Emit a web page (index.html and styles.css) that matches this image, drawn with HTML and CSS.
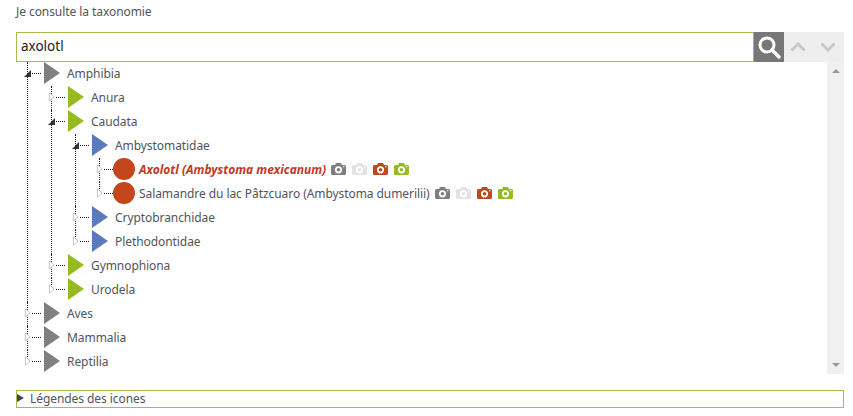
FILE: index.html
```html
<!DOCTYPE html>
<html lang="fr">
<head>
<meta charset="UTF-8">
<title>Je consulte la taxonomie</title>
<meta name="viewport" content="width=device-width,initial-scale=1.0">
<link rel="stylesheet" href="styles.css">
</head>
<body>
<svg class="defs" width="0" height="0" aria-hidden="true">
  <symbol id="camera" viewBox="0 0 15 12">
    <path fill="currentColor" d="M1.500 2H4L5 0H10L11 2H13.500A1.500 1.500 0 0 1 15 3.500V10.500A1.500 1.500 0 0 1 13.500 12H1.500A1.500 1.500 0 0 1 0 10.500V3.500A1.500 1.500 0 0 1 1.500 2Z"/>
    <circle cx="7.500" cy="6.800" r="3.600" fill="#fff"/>
    <circle cx="7.500" cy="6.800" r="1.800" fill="currentColor"/>
    <rect x="12" y="3.200" width="1.500" height="1" fill="#fff"/>
  </symbol>
  <symbol id="tog-open" viewBox="0 0 7 10">
    <path fill="#fff" stroke="#b4b4b4" stroke-width=".8" d="M1.400 .8 6.200 5 1.400 9.200Z"/>
  </symbol>
  <symbol id="tog-close" viewBox="0 0 7 10">
    <path fill="#333" d="M0 9 7 2V9Z"/>
  </symbol>
</svg>

<div class="page">
  <p class="title">Je consulte la taxonomie</p>

  <div class="search">
    <input class="search-input" type="text" value="axolotl">
    <button class="search-btn" aria-label="Rechercher">
      <svg width="24" height="24" viewBox="0 0 24 24"><circle cx="10" cy="10" r="7" fill="none" stroke="#fff" stroke-width="3"/><path d="M15 15 22 22" stroke="#fff" stroke-width="3.400" stroke-linecap="round"/></svg>
    </button>
    <div class="search-nav">
      <svg width="16" height="10" viewBox="0 0 16 10"><path d="M1.500 8.500 8 2l6.500 6.500" fill="none" stroke="#c9c9c9" stroke-width="3"/></svg>
      <svg width="16" height="10" viewBox="0 0 16 10"><path d="M1.500 1.500 8 8l6.500-6.500" fill="none" stroke="#c9c9c9" stroke-width="3"/></svg>
    </div>
  </div>

  <div class="tree-box">
    <ul class="tree">
      <li>
        <div class="node"><span class="tog"><svg class="tog-i"><use href="#tog-close"/></svg><i></i></span><span class="tri grey"></span><span class="name">Amphibia</span></div>
        <ul>
          <li><div class="node"><span class="tog"><svg class="tog-i"><use href="#tog-open"/></svg><i></i></span><span class="tri green"></span><span class="name">Anura</span></div></li>
          <li>
            <div class="node"><span class="tog"><svg class="tog-i"><use href="#tog-close"/></svg><i></i></span><span class="tri green"></span><span class="name">Caudata</span></div>
            <ul>
              <li>
                <div class="node"><span class="tog"><svg class="tog-i"><use href="#tog-close"/></svg><i></i></span><span class="tri blue"></span><span class="name">Ambystomatidae</span></div>
                <ul>
                  <li><div class="node"><span class="tog"><svg class="tog-i"><use href="#tog-open"/></svg><i></i></span><span class="dot"></span><span class="name current">Axolotl (Ambystoma mexicanum)</span>
                    <span class="cams"><svg class="c-grey"><use href="#camera"/></svg><svg class="c-pale"><use href="#camera"/></svg><svg class="c-red"><use href="#camera"/></svg><svg class="c-green"><use href="#camera"/></svg></span></div></li>
                  <li><div class="node"><span class="tog"><svg class="tog-i"><use href="#tog-open"/></svg><i></i></span><span class="dot"></span><span class="name">Salamandre du lac Pâtzcuaro (Ambystoma dumerilii)</span>
                    <span class="cams"><svg class="c-grey"><use href="#camera"/></svg><svg class="c-pale"><use href="#camera"/></svg><svg class="c-red"><use href="#camera"/></svg><svg class="c-green"><use href="#camera"/></svg></span></div></li>
                </ul>
              </li>
              <li><div class="node"><span class="tog"><svg class="tog-i"><use href="#tog-open"/></svg><i></i></span><span class="tri blue"></span><span class="name">Cryptobranchidae</span></div></li>
              <li><div class="node"><span class="tog"><svg class="tog-i"><use href="#tog-open"/></svg><i></i></span><span class="tri blue"></span><span class="name">Plethodontidae</span></div></li>
            </ul>
          </li>
          <li><div class="node"><span class="tog"><svg class="tog-i"><use href="#tog-open"/></svg><i></i></span><span class="tri green"></span><span class="name">Gymnophiona</span></div></li>
          <li><div class="node"><span class="tog"><svg class="tog-i"><use href="#tog-open"/></svg><i></i></span><span class="tri green"></span><span class="name">Urodela</span></div></li>
        </ul>
      </li>
      <li><div class="node"><span class="tog"><svg class="tog-i"><use href="#tog-open"/></svg><i></i></span><span class="tri grey"></span><span class="name">Aves</span></div></li>
      <li><div class="node"><span class="tog"><svg class="tog-i"><use href="#tog-open"/></svg><i></i></span><span class="tri grey"></span><span class="name">Mammalia</span></div></li>
      <li><div class="node"><span class="tog"><svg class="tog-i"><use href="#tog-open"/></svg><i></i></span><span class="tri grey"></span><span class="name">Reptilia</span></div></li>
    </ul>
    <div class="scrollbar"><span class="sb-up"></span><span class="sb-down"></span></div>
  </div>

  <div class="legend"><span class="legend-arrow"></span>Légendes des icones</div>
</div>
</body>
</html>
```

FILE: styles.css
```css
:root{
  --c-text:#50555a;--c-line:#a4bc4a;--c-grey:#7f7f7f;--c-green:#95bb1e;
  --c-blue:#5b7abd;--c-red:#c4461c;--c-bar:#f0f0f0;
}
*{box-sizing:border-box}
html,body{margin:0;height:416px;overflow:hidden}
body{background:#fff;color:var(--c-text);font-family:"Noto Sans","Open Sans",sans-serif;font-size:12px;letter-spacing:-.07px}
.defs{display:block;height:0}
.page{padding:4px 9px 0 16px}
.title{margin:0 0 12px;line-height:16px;height:16px}

.search{display:flex;height:30px}
.search-input{
  flex:1;min-width:0;height:30px;padding:0 4px 2px;border:1px solid var(--c-line);outline:none;
  font:400 13.500px "Noto Sans","Open Sans",sans-serif;color:#1c1c1c
}
.search-btn{
  width:30px;height:30px;padding:0;border:none;background:#777;
  display:flex;align-items:center;justify-content:center
}
.search-nav{width:60px;background:#eee;display:flex;align-items:center;justify-content:space-between;padding:0 8px 0 6px}

.tree-box{display:flex;height:312px}
.tree{flex:1;padding-left:8px}
.tree,.tree ul{list-style:none;margin:0}
.tree ul{margin-left:24px;padding:0}
.tree li{position:relative}
.tree li::before{content:"";position:absolute;left:3px;top:0;bottom:0;border-left:1px dotted #222}
.tree li:last-child::before{bottom:auto;height:11px}

.node{display:flex;align-items:flex-start;height:24px}
.tog{position:relative;width:20px;height:22px;display:flex;align-items:center;flex:none}
.tog-i{width:7px;height:10px;flex:none}
.tog i{width:9px;margin-left:1px;border-top:1px dotted #222}
.tri{width:0;height:0;flex:none;border-style:solid;border-width:11px 0 11px 16px;border-color:transparent}
.tri.grey{border-left-color:var(--c-grey)}
.tri.green{border-left-color:var(--c-green)}
.tri.blue{border-left-color:var(--c-blue)}
.dot{width:22px;height:22px;margin:0 -3px;flex:none;border-radius:50%;background:var(--c-red)}
.name{margin-left:7px;line-height:24px;white-space:nowrap}
.name.current{color:#c0392b;font-weight:700;font-style:italic;letter-spacing:0}

.cams{display:flex;gap:6px;margin-left:5px;height:22px;align-items:center}
.cams svg{width:15px;height:12px}
.c-grey{color:var(--c-grey)}
.c-pale{color:#e2e2e2}
.c-red{color:var(--c-red)}
.c-green{color:var(--c-green)}

.scrollbar{width:17px;background:var(--c-bar);display:flex;flex-direction:column;justify-content:space-between;align-items:center;padding:7px 0}
.sb-up,.sb-down{width:0;height:0;border-style:solid;border-color:transparent}
.sb-up{border-width:0 4px 4px;border-bottom-color:#999}
.sb-down{border-width:4px 4px 0;border-top-color:#999}

.legend{
  display:flex;align-items:center;height:18px;margin-top:16px;border:1px solid var(--c-line);
  line-height:16px;padding-left:13px;position:relative
}
.legend-arrow{position:absolute;left:0;top:3px;width:0;height:0;border-style:solid;border-width:4px 0 4px 7px;border-color:transparent transparent transparent #444}
```
